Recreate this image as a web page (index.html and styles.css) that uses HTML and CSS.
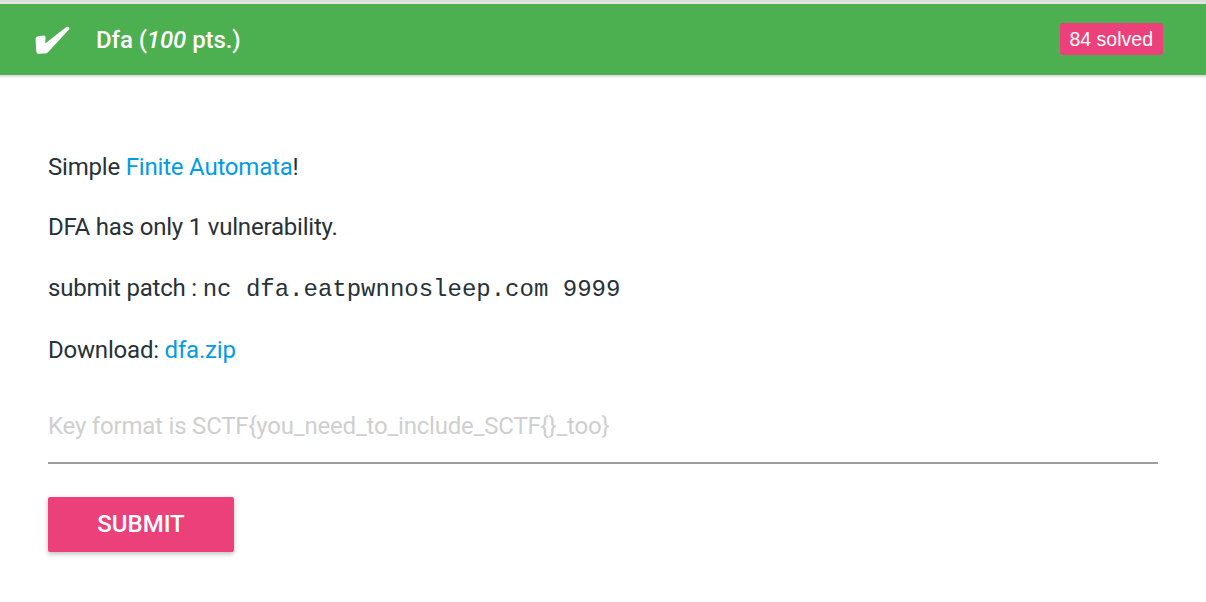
FILE: index.html
```html
<!DOCTYPE html>
<html>
<head>
<meta charset="utf-8">
<link rel="stylesheet" href="styles.css">
</head>
<body>
<div class="card">
  <div class="card-header">
    <div class="title">
      <svg class="check" width="38" height="30" viewBox="0 0 38 30">
        <path d="M2.5 12.5 Q3 10.5 5 10.3 L11 9.6 Q12.6 9.6 12.5 11.2 L12.3 17.5 L33 1.2 Q35 0 36.3 1.6 Q37 2.6 35.8 3.8 L15 26.2 Q13.7 27.6 11.5 27.6 L5.5 27.8 Q3.2 27.8 3.3 25.6 Z" fill="#fff"/>
      </svg>
      <span class="name">Dfa (<em>100</em> pts.)</span>
    </div>
    <span class="badge">84 solved</span>
  </div>
  <div class="card-body">
    <div class="desc">
      <p>Simple <a href="#">Finite Automata</a>!</p>
      <p>DFA has only 1 vulnerability.</p>
      <p>submit patch : <code>nc dfa.eatpwnnosleep.com 9999</code></p>
      <p>Download: <a href="#">dfa.zip</a></p>
    </div>
    <form class="key-form">
      <input class="key-input" type="text" placeholder="Key format is SCTF{you_need_to_include_SCTF{}_too}">
      <button class="submit" type="button">SUBMIT</button>
    </form>
  </div>
</div>
</body>
</html>
```

FILE: styles.css
```css
html, body {
  margin: 0;
  padding: 0;
  background: #fff;
}
body {
  font-family: Roboto, "Liberation Sans", sans-serif;
  color: #263238;
  width: 1206px;
  height: 602px;
  overflow: hidden;
}
.card {
  padding-top: 4px;
  background: linear-gradient(#d9d9d9, #e6e6e6 4px, #fff 4px);
}
.card-header {
  height: 71px;
  background: #4caf50;
  display: flex;
  align-items: center;
  justify-content: space-between;
  padding: 0 43px 0 33px;
  box-shadow: 0 2px 1px rgba(0,0,0,0.12);
}
.title {
  display: flex;
  align-items: center;
  color: #fff;
}
.check {
  display: block;
  margin-right: 25px;
  margin-top: 2px;
}
.name {
  font-size: 24px;
  font-weight: 500;
  letter-spacing: -0.1px;
}
.name em {
  font-style: italic;
}
.badge {
  background: #ec407a;
  color: #fff;
  font-family: "Liberation Sans", Arial, sans-serif;
  font-size: 19.5px;
  height: 32px;
  line-height: 32px;
  padding: 0 10px;
  border-radius: 3px;
  margin-top: -2px;
}
.card-body {
  padding: 74px 48px 0 48px;
}
.desc {
  display: flex;
  flex-direction: column;
  gap: 24.3px;
}
.desc p {
  margin: 0;
  font-size: 24px;
  line-height: 36px;
  letter-spacing: -0.2px;
}
.desc a {
  color: #039be5;
  text-decoration: none;
}
.desc code {
  font-family: "Liberation Mono", "Courier New", monospace;
  font-size: 24px;
  letter-spacing: 0;
  color: #263238;
}
.key-form {
  margin-top: 40px;
}
.key-input {
  display: block;
  box-sizing: border-box;
  width: 1110px;
  height: 56px;
  border: none;
  border-bottom: 2px solid #9e9e9e;
  padding: 0 0 18px 0;
  font-family: Roboto, sans-serif;
  font-size: 24px;
  letter-spacing: -0.2px;
  color: #263238;
  outline: none;
  background: transparent;
}
.key-input::placeholder {
  color: #cfcfcf;
}
.submit {
  display: block;
  margin-top: 33px;
  width: 186px;
  height: 55px;
  background: #ec407a;
  color: #fff;
  border: none;
  border-radius: 2px;
  font-family: Roboto, sans-serif;
  font-size: 24px;
  font-weight: 500;
  box-shadow: 0 2px 5px rgba(0,0,0,0.26);
}
```
